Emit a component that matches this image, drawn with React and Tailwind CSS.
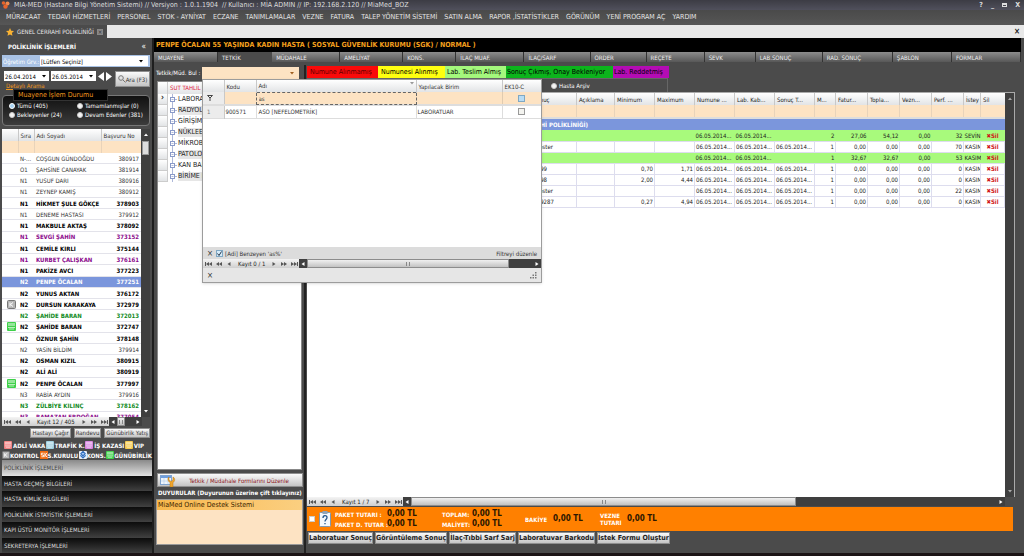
import React, { useState } from "react";

const menuItems = [
  "MÜRACAAT", "TEDAVİ HİZMETLERİ", "PERSONEL", "STOK - AYNİYAT", "ECZANE", "TANIMLAMALAR", "VEZNE", "FATURA",
  "TALEP YÖNETİM SİSTEMİ", "SATIN ALMA", "RAPOR ,İSTATİSTİKLER", "GÖRÜNÜM", "YENİ PROGRAM AÇ", "YARDIM",
];

const tabs = [
  "MUAYENE", "TETKİK", "MÜDAHALE", "AMELİYAT", "KONS.", "İLAÇ MUAF.", "İLAÇ/SARF",
  "ORDER", "REÇETE", "SEVK", "LAB.SONUÇ", "RAD. SONUÇ", "ŞABLON", "FORMLAR",
];

const patients = [
  { sira: "N-...", name: "COŞGUN GÜNDOĞDU", no: "380917" },
  { sira: "O1", name: "ŞAHSİNE CANAYAK", no: "381914" },
  { sira: "N1", name: "YUSUF DARI", no: "380916" },
  { sira: "N1", name: "ZEYNEP KAMIŞ", no: "380912" },
  { sira: "N1", name: "HİKMET ŞULE GÖKÇE", no: "378903", tone: "bold" },
  { sira: "N1", name: "DENEME HASTASI", no: "379912" },
  { sira: "N1", name: "MAKBULE AKTAŞ", no: "378092", tone: "bold" },
  { sira: "N1", name: "SEVGİ ŞAHİN", no: "373152", tone: "purple" },
  { sira: "N1", name: "CEMİLE KIRLI", no: "375144", tone: "bold" },
  { sira: "N1", name: "KURBET ÇALIŞKAN", no: "376161", tone: "purple" },
  { sira: "N1", name: "PAKİZE AVCI", no: "377223", tone: "bold" },
  { sira: "N2", name: "PENPE ÖCALAN", no: "377251", tone: "selected" },
  { sira: "N2", name: "YUNUS AKTAN", no: "376172", tone: "bold" },
  { sira: "N2", name: "DURSUN KARAKAYA", no: "372979", tone: "bold", icon: "kontrol" },
  { sira: "N2", name: "ŞAHİDE BARAN", no: "372013", tone: "green" },
  { sira: "N2", name: "ŞAHİDE BARAN", no: "372747", tone: "bold", icon: "bed" },
  { sira: "N2", name: "ÖZNUR ŞAHİN", no: "378148", tone: "bold" },
  { sira: "N2", name: "YASİN BİLDİM", no: "379914" },
  { sira: "N2", name: "OSMAN KIZIL", no: "380915", tone: "bold" },
  { sira: "N2", name: "ALİ ALİ", no: "380919", tone: "bold" },
  { sira: "N2", name: "PENPE ÖCALAN", no: "377997", tone: "bold", icon: "bed" },
  { sira: "N3", name: "RABİA AYDIN", no: "379916" },
  { sira: "N3", name: "ZÜLBİYE KILINÇ", no: "378162", tone: "green" },
  { sira: "N3", name: "RAMAZAN ERDOĞAN", no: "377054", tone: "purple" },
];

const toneClass = {
  bold: "font-bold text-black",
  purple: "font-bold text-[#8b0a8b]",
  green: "font-bold text-[#0f8a1c]",
  selected: "font-bold text-white bg-[#7b96dc]",
};

const treeItems = [
  "LABORATUAR", "RADYOLOJİ", "GİRİŞİMSEL", "NÜKLEER TIP", "MİKROBİYOLOJİ", "PATOLOJİ", "KAN BANKASI", "BİRİME BAĞLI",
];

const D = "06.05.2014...";
const results = [
  { sonuc: "", min: "", max: "", num: D, kab: D, son: "", m: "2", fatur: "27,06", topla: "54,12", vezn: "0,00", perf: "32", istey: "SEVİN", green: true },
  { sonuc: "Göster", min: "", max: "", num: D, kab: D, son: D, m: "1", fatur: "0,00", topla: "0,00", vezn: "0,00", perf: "70", istey: "KASIM" },
  { sonuc: "", min: "", max: "", num: D, kab: D, son: "", m: "1", fatur: "32,67", topla: "32,67", vezn: "0,00", perf: "53", istey: "KASIM", green: true },
  { sonuc: "0,99", min: "0,70", max: "1,71", num: D, kab: D, son: D, m: "1", fatur: "0,00", topla: "0,00", vezn: "0,00", perf: "0", istey: "KASIM" },
  { sonuc: "2,98", min: "2,00", max: "4,44", num: D, kab: D, son: D, m: "1", fatur: "0,00", topla: "0,00", vezn: "0,00", perf: "0", istey: "KASIM" },
  { sonuc: "Göster", min: "", max: "", num: D, kab: D, son: D, m: "1", fatur: "0,00", topla: "0,00", vezn: "0,00", perf: "22", istey: "KASIM" },
  { sonuc: "1,9287", min: "0,27", max: "4,94", num: D, kab: D, son: D, m: "1", fatur: "0,00", topla: "0,00", vezn: "0,00", perf: "0", istey: "KASIM" },
];

const resultHeads = [
  "", "Sonuç", "Açıklama", "Minimum", "Maximum", "Numune ...", "Lab. Kab...", "Sonuç T...",
  "M...", "Fatur...", "Topla...", "Vezn...", "Perf. ...", "İstey",
];

const navItems = [
  "HASTA GEÇMİŞ BİLGİLERİ", "HASTA KİMLİK BİLGİLERİ", "POLİKLİNİK İSTATİSTİK İŞLEMLERİ",
  "KAPI ÜSTÜ MONİTÖR İŞLEMLERİ", "SEKRETERYA İŞLEMLERİ",
];

const headBg = "bg-linear-to-b from-white to-[#e2e4e6]";
const silver = "bg-linear-to-b from-[#fafafa] to-[#c4c4c4] border border-[#8e8e8e]";

const Arrow = ({ left, double, bar, className = "" }) => (
  <svg viewBox="0 0 8 6" className={`w-2 h-1.5 shrink-0 ${left ? "" : "rotate-180"} ${className}`} fill="currentColor">
    {double ? <path d="M4 1v4L1 3zM7 1v4L4 3z" /> : <path d="M5.500 1v4L2.500 3z" />}
    {bar && <path d="M0 1h1v4H0z" />}
  </svg>
);

const Caret = ({ up, className = "" }) => (
  <svg viewBox="0 0 6 4" className={`w-1.5 h-1 shrink-0 ${up ? "rotate-180" : ""} ${className}`} fill="currentColor">
    <path d="M1 1h4L3 3.500z" />
  </svg>
);

const PagerButton = ({ label, ...rest }) => (
  <button type="button" aria-label={label} className="flex w-2.5 justify-center text-[#555]"><Arrow {...rest} /></button>
);

const Pager = ({ text }) => (
  <div className="flex items-center h-[9px] pl-px bg-linear-to-b from-[#f4f4f4] to-[#cfcfcf] text-[#222] shrink-0">
    <PagerButton label="İlk kayıt" left double bar />
    <PagerButton label="Önceki sayfa" left double />
    <PagerButton label="Önceki kayıt" left />
    <span className="px-1 whitespace-nowrap">{text}</span>
    <PagerButton label="Sonraki kayıt" />
    <PagerButton label="Sonraki sayfa" double />
    <PagerButton label="Son kayıt" double bar />
  </div>
);

const HScroll = ({ thumbClass }) => (
  <div className="flex flex-1 items-stretch bg-[#3f3f3f] text-white">
    <button type="button" aria-label="Sola kaydır" className="flex items-center w-2"><Arrow left /></button>
    <div className={`${thumbClass} flex items-center justify-center bg-linear-to-b from-[#f0f0f0] to-[#c2c2c2] border border-[#8c8c8c]`}>
      <span className="w-1 h-1 border-x border-[#888]" />
    </div>
    <span className="flex-1" />
    <button type="button" aria-label="Sağa kaydır" className="flex items-center w-2"><Arrow /></button>
  </div>
);

const BedIcon = ({ color = "#3fd04a", size = "w-[9px] h-[9px]" }) => (
  <svg viewBox="0 0 9 9" className={`${size} shrink-0`}>
    <rect width="9" height="9" rx="1" fill={color} />
    <rect x="1" y="1" width="7" height="3" fill="#fff" opacity="0.45" />
    <path d="M1 5.500h7M2 7h5" stroke="#fff" strokeWidth="0.8" opacity="0.8" />
  </svg>
);

const KontrolIcon = ({ size = "w-[9px] h-[9px]" }) => (
  <svg viewBox="0 0 9 9" className={`${size} shrink-0`}>
    <rect x="0.500" y="0.500" width="8" height="8" rx="1" fill="#b5b5b5" stroke="#777" />
    <path d="M3 2.500v4M6 2.500L3.500 4.500L6 6.500" stroke="#fff" fill="none" />
  </svg>
);

const SkIcon = () => (
  <svg viewBox="0 0 9 9" className="w-2 h-2 shrink-0">
    <rect width="9" height="9" fill="#f06a10" />
    <path d="M4 2.500H1.500v2H4v2H1.500M5.500 2v5M8 2L6 4.500L8 7" stroke="#fff" fill="none" />
  </svg>
);

const KonsIcon = () => (
  <svg viewBox="0 0 9 9" className="w-2 h-2 shrink-0">
    <rect width="9" height="9" rx="1" fill="#e8f0fa" />
    <path d="M4.500 0.500L7 3L4.500 5.500L2 3zM1.500 5l3 3l3-3" stroke="#2f6fc0" strokeWidth="1.200" fill="#a8c8f0" />
  </svg>
);

const Radio = ({ children, ...rest }) => (
  <label className="flex items-center gap-0.5 whitespace-nowrap">
    <input type="radio" className="appearance-none w-[6px] h-[6px] rounded-full bg-[#f4f4f4] border border-[#ccc] checked:bg-[#a8d4f5] checked:border-white shrink-0" {...rest} />
    {children}
  </label>
);

const PatientPanel = () => {
  const [status, setStatus] = useState("tumu");
  const radio = (value) => ({ name: "durum", checked: status === value, onChange: () => setStatus(value) });

  return (
    <aside className="w-[154px] shrink-0 flex flex-col pl-0.5 border-r-2 border-[#1e1e1e] bg-[#4b4b4b] text-white">
      <div className="flex items-center justify-between h-[17px] px-1.5 shrink-0">
        <h2 className="font-bold">POLİKLİNİK İŞLEMLERİ</h2>
        <button type="button" aria-label="Paneli daralt" className="text-[8px] leading-none">«</button>
      </div>

      <div className="flex items-center h-3 mr-0.5 bg-[#a9c2e4] pr-0.5 shrink-0">
        <label htmlFor="ogretim" className="w-[38px] pl-px whitespace-nowrap">Öğretim Grv.:</label>
        <div className="flex-1 flex items-center bg-white pr-1 text-black">
          <select id="ogretim" className="appearance-none flex-1 h-2.5 px-px">
            <option>[Lütfen Seçiniz]</option>
          </select>
          <Caret />
        </div>
      </div>

      <div className="flex items-start gap-[3px] h-5 pt-1 px-0.5 shrink-0">
        <div>
          <div className="flex gap-0.5">
            {["26.04.2014", "26.05.2014"].map((d, i) => (
              <div key={d} className="flex items-center w-[45px] h-2.5 bg-white text-black pr-0.5">
                <input aria-label={i ? "Bitiş tarihi" : "Başlangıç tarihi"} defaultValue={d} className="w-[37px] pl-px" />
                <Caret />
              </div>
            ))}
            <div className="flex items-center">
              <button type="button" aria-label="Önceki gün"><svg viewBox="0 0 7 9" className="w-[7px] h-[9px]" fill="#fff"><path d="M6 0v9L0 4.500z" /></svg></button>
              <button type="button" aria-label="Sonraki gün"><svg viewBox="0 0 7 9" className="w-[7px] h-[9px]" fill="#fff"><path d="M1 0v9L7 4.500z" /></svg></button>
            </div>
          </div>
          <a href="#detay" className="block pl-0.5 leading-[9px] text-[#f0981e] underline">Detaylı Arama</a>
        </div>
        <button type="button" className={`flex items-center justify-center flex-1 h-4 text-[#333] whitespace-nowrap ${silver}`}>
          <svg viewBox="0 0 8 8" className="w-2 h-2" fill="none" stroke="#777"><circle cx="3" cy="3" r="2.300" /><path d="M5 5l2.500 2.500" /></svg>
          Ara (F3)
        </button>
      </div>

      <fieldset className="flex flex-col h-[37px] mt-0.5 mb-[3px] mr-0.5 shrink-0 rounded border border-[#777] bg-linear-to-b from-[#111] to-[#3c3c3c]">
        <legend className="w-[95px] h-3 ml-2.5 pl-1 bg-black border border-[#333] text-[#f0981e] text-[7px] leading-[11px]">Muayene İşlem Durumu</legend>
        <div className="grid grid-cols-[68px_1fr] pl-1.5 leading-[9px]">
          <Radio {...radio("tumu")}>Tümü (405)</Radio>
          <Radio {...radio("tamam")}>Tamamlanmışlar (0)</Radio>
          <Radio {...radio("bekleyen")}>Bekleyenler (24)</Radio>
          <Radio {...radio("devam")}>Devam Edenler (381)</Radio>
        </div>
      </fieldset>

      <div className="flex flex-1 min-h-0 mr-0.5">
        <div className="flex-1 bg-white text-[#333] overflow-hidden">
          <table className="w-full table-fixed h-[294px]">
            <colgroup><col className="w-4" /><col className="w-4" /><col className="w-[67px]" /><col /></colgroup>
            <thead>
              <tr className={`h-3 text-left ${headBg}`}>
                <th className="border-r border-[#c8c8c8]" />
                <th className="font-normal pl-0.5 border-r border-[#c8c8c8]">Sıra</th>
                <th className="font-normal pl-0.5 border-r border-[#c8c8c8]">Adı Soyadı</th>
                <th className="font-normal pl-0.5 whitespace-nowrap">Başvuru No</th>
              </tr>
              <tr className="h-3 bg-[#fde3c3]"><td /><td className="border-x border-[#e8d3ba]" /><td className="border-r border-[#e8d3ba]" /><td /></tr>
            </thead>
            <tbody>
              {patients.map((p) => (
                <tr key={p.no} className={`border-b border-[#e3e3ea] whitespace-nowrap ${toneClass[p.tone] || ""}`}>
                  <td className="pl-[5px]">{p.icon === "bed" && <BedIcon />}{p.icon === "kontrol" && <KontrolIcon />}</td>
                  <td className="pl-0.5">{p.sira}</td>
                  <td className="pl-0.5">{p.name}</td>
                  <td className="pr-0.5 text-right">{p.no}</td>
                </tr>
              ))}
            </tbody>
          </table>
        </div>
        <div className="w-[9px] flex flex-col items-center bg-[#3f3f3f] py-1">
          <Caret up />
          <span className="w-[7px] h-3.5 mt-1 bg-[#ddd] border border-[#999]" />
          <span className="flex-1" />
          <Caret />
        </div>
      </div>
      <div className="flex h-[9px] mr-2.5 shrink-0">
        <Pager text="Kayıt 12 / 405" />
        <HScroll thumbClass="w-2" />
      </div>

      <div className="flex justify-end gap-[3px] h-3 pt-0.5 pr-0.5 shrink-0">
        {["Hastayı Çağır", "Randevu", "Günübirlik Yatış"].map((t) => (
          <button key={t} type="button" className={`h-2.5 px-px leading-2 text-[#333] whitespace-nowrap ${silver}`}>{t}</button>
        ))}
      </div>

      <div className="h-[22px] pt-0.5 shrink-0 font-bold whitespace-nowrap leading-[9px]">
        <div className="flex items-center justify-between pl-0.5 pr-2 h-2.5">
          <span className="flex items-center gap-px"><BedIcon size="w-2 h-2" color="#f08080" />ADLİ VAKA</span>
          <span className="flex items-center gap-px"><BedIcon size="w-2 h-2" color="#9fd0e0" />TRAFİK K.</span>
          <span className="flex items-center gap-px"><BedIcon size="w-2 h-2" color="#d884e0" />İŞ KAZASI</span>
          <span className="flex items-center gap-px"><BedIcon size="w-2 h-2" color="#f5c84a" />VIP</span>
        </div>
        <div className="flex items-center justify-between h-2.5">
          <span className="flex items-center"><KontrolIcon size="w-2 h-2" />KONTROL</span>
          <span className="flex items-center"><SkIcon />S.KURULU</span>
          <span className="flex items-center"><KonsIcon />KONS.</span>
          <span className="flex items-center"><BedIcon size="w-2 h-2" />GÜNÜBİRLİK</span>
        </div>
      </div>

      <nav className="flex flex-col h-[93px] shrink-0">
        <button type="button" className="flex-1 pl-0.5 text-left text-[#444] bg-linear-to-b from-[#8a8a8a] to-[#e2e2e2]">POLİKLİNİK İŞLEMLERİ</button>
        {navItems.map((t) => (
          <button key={t} type="button" className="flex-1 pl-0.5 text-left text-[#ddd] bg-linear-to-b from-[#0c0c0c] to-[#414141]">{t}</button>
        ))}
      </nav>
    </aside>
  );
};

const LookupPopup = () => (
  <div className="absolute z-10 left-12 top-3.5 w-[340px] h-[204px] flex flex-col bg-white border border-[#9c9c9c] text-[#333] shadow">
    <table className="w-full table-fixed">
      <colgroup><col className="w-[21px]" /><col className="w-8" /><col /><col className="w-[86px]" /><col className="w-[39px]" /></colgroup>
      <thead>
        <tr className={`h-3 text-left ${headBg}`}>
          <th className="border-r border-[#c8c8c8]" />
          <th className="font-normal pl-0.5 border-r border-[#c8c8c8]">Kodu</th>
          <th className="font-normal pl-0.5 border-r border-[#c8c8c8]">
            <span className="flex justify-between pr-px">Adı<Caret className="text-[#999]" /></span>
          </th>
          <th className="font-normal pl-0.5 border-r border-[#c8c8c8]">Yapılacak Birim</th>
          <th className="font-normal pl-0.5">EK10-C</th>
        </tr>
      </thead>
      <tbody>
        <tr className="h-3 bg-[#fde3c3]">
          <td className="pl-1 bg-[#ececec] border-r border-[#c8c8c8]">
            <svg viewBox="0 0 6 6" className="w-1.5 h-1.5" fill="none" stroke="#444"><path d="M0.500 0.500h5L3 3zM3 3v3" /></svg>
          </td>
          <td />
          <td className="border border-dashed border-[#666]"><input aria-label="Adı filtresi" defaultValue="as" className="block w-full h-2 pl-0.5" /></td>
          <td />
          <td className="border-l border-[#e0cbb0] text-center"><input type="checkbox" aria-label="EK10-C filtresi" className="appearance-none block mx-auto w-[7px] h-[7px] bg-[#b8dcf4] border border-[#7fa8c4]" /></td>
        </tr>
        <tr className="h-0.5 bg-[#ddd]"><td colSpan={5} /></tr>
        <tr className="h-3 border-b border-[#ddd]">
          <td className="pl-1 bg-[#ececec] border-r border-[#c8c8c8] text-[#777]">1</td>
          <td className="pl-px border-r border-[#ddd]">900571</td>
          <td className="pl-0.5 border-r border-[#ddd]">ASO [NEFELOMETRİK]</td>
          <td className="pl-px border-r border-[#ddd]">LABORATUAR</td>
          <td><input type="checkbox" aria-label="EK10-C" className="appearance-none block mx-auto w-[7px] h-[7px] bg-[#f4f4f0] border border-[#999]" /></td>
        </tr>
      </tbody>
    </table>
    <div className="flex-1" />
    <div className="flex items-center h-3 gap-[3px] px-1 bg-[#dcdcdc]">
      <button type="button" aria-label="Filtreyi kaldır" className="text-[8px]">×</button>
      <label className="flex items-center gap-0.5">
        <span className="relative flex">
          <input type="checkbox" defaultChecked className="peer appearance-none w-[7px] h-[7px] bg-[#d6ebfa] border border-[#7fa8c4]" />
          <svg viewBox="0 0 7 7" className="absolute inset-0 w-[7px] h-[7px] hidden peer-checked:block pointer-events-none" fill="none" stroke="#234"><path d="M1.500 3.500l1.500 2l2.500-4" /></svg>
        </span>
        [Adi] Benzeyen 'as%'
      </label>
      <a href="#filtre" className="ml-auto">Filtreyi düzenle</a>
    </div>
    <div className="flex h-[9px]">
      <Pager text="Kayıt 0 / 1" />
      <HScroll thumbClass="w-5/6" />
    </div>
    <div className="flex items-center justify-between h-3.5 px-1 bg-[#e6e6e6]">
      <button type="button" aria-label="Kapat" className="text-[8px]">×</button>
      <svg viewBox="0 0 7 7" className="w-[7px] h-[7px]" fill="#777"><path d="M5 5h1.500v1.500H5zM2.500 5H4v1.500H2.500zM0 5h1.500v1.500H0zM5 2.500h1.500V4H5zM2.500 2.500H4V4H2.500zM5 0h1.500v1.500H5z" /></svg>
    </div>
  </div>
);

const RequestColumn = () => (
  <section className="relative w-[149px] shrink-0 flex flex-col pb-2 text-white">
    <div className="flex items-center h-3.5 pl-0.5 pt-px shrink-0">
      <label htmlFor="tetkik" className="w-[46px] whitespace-nowrap">Tetkik/Müd. Bul :</label>
      <div className="flex-1 flex items-center h-3 mr-1 pr-1 bg-[#fde3c3] text-black">
        <input id="tetkik" className="flex-1 min-w-0 h-2.5" />
        <Caret className="text-[#a06020]" />
      </div>
    </div>
    <LookupPopup />

    <div className="flex-1 ml-[3px] mr-px mt-0.5 bg-white border border-[#888] text-[#222] overflow-hidden">
      <div className="flex items-center h-3 text-[#e0203c]">
        <span className={`w-2.5 h-full border-r border-[#ccc] ${headBg}`} />
        <span className={`flex-1 h-full leading-3 pl-0.5 ${headBg}`}>SUT TAHLİL TETKİK</span>
      </div>
      <ul>
        {treeItems.map((t, i) => (
          <li key={t} className="flex items-center h-[11px] text-[7px]">
            <span className={`w-2.5 h-full border-r border-b border-[#ccc] text-center text-[8px] leading-2 font-bold ${headBg}`}>{i === 0 ? "›" : ""}</span>
            <svg viewBox="0 0 8 11" className="w-2 h-[11px] mx-px shrink-0" fill="none" stroke="#8a9ac8"><rect x="1.500" y="3.500" width="4" height="4" /><path d="M2.500 5.500h2M3.500 0v3M3.500 8v3M6 5.500h2" strokeWidth="0.700" /></svg>
            <span className={`flex-1 whitespace-nowrap ${i % 2 ? "bg-[#e6e6e6]" : ""}`}>{t}</span>
          </li>
        ))}
      </ul>
    </div>

    <button type="button" className={`flex items-center h-3.5 mt-[3px] ml-[3px] shrink-0 text-[#8a1420] whitespace-nowrap ${silver}`}>
      <svg viewBox="0 0 16 13" className="w-4 h-[13px] ml-0.5 shrink-0">
        <rect x="0.500" y="1.500" width="11" height="9" fill="#eef5fd" stroke="#7fa3cf" />
        <path d="M1 2h10v2H1z" fill="#6f9fe0" />
        <path d="M4 4v6M8 4v6M1 7h10" stroke="#b7cce6" strokeWidth="0.600" />
        <path d="M9 3v3l2 1.500l2-1.500V3c2 1 2.500 4 0 5.500V13h-3V8.500C7.500 7 7.500 4 9 3z" fill="#f0a52c" stroke="#b87812" strokeWidth="0.500" />
      </svg>
      <span className="flex-1 text-center">Tetkik / Müdahale Formlarını Düzenle</span>
    </button>
    <h3 className="h-3 leading-3 pl-1 shrink-0 font-bold whitespace-nowrap">DUYURULAR (Duyurunun üzerine çift tıklayınız)</h3>
    <div className="h-[46px] ml-0.5 shrink-0 bg-[#fde3c3] border border-[#999]">
      <a href="#destek" className="block h-2.5 pl-px leading-2.5 text-[7px] text-[#3a2400] bg-linear-to-r from-[#f8b84c] to-[#fbcf80]">MiaMed Online Destek Sistemi</a>
    </div>
  </section>
);

const money = "text-[8px] leading-2.5 text-[#2c1600]";

const ResultsPanel = () => (
  <section className="flex-1 min-w-0 flex flex-col ml-px pl-px pb-2 mr-1 border-l-2 border-[#222] text-white">
    <div className="flex h-3 mt-px shrink-0 text-[7px] leading-3 text-black whitespace-nowrap">
      <span className="w-[71px] pl-[3px] bg-[#fa0a0a] text-[#5a0000]">Numune Alınmamış</span>
      <span className="w-[67px] pl-[3px] bg-[#ffff10]">Numunesi Alınmış</span>
      <span className="w-[61px] pl-0.5 bg-[#a4f87c]">Lab. Teslim Almış</span>
      <span className="w-[107px] pl-px bg-[#0cb41c]">Sonuç Çıkmış, Onay Bekleniyor</span>
      <span className="w-[56px] pl-px bg-[#b40cb4]">Lab. Reddetmiş</span>
    </div>
    <div className="flex items-center h-3.5 w-[361px] pl-[244px] shrink-0 border-t border-r border-[#666]">
      <Radio name="arsiv">Hasta Arşiv</Radio>
    </div>

    <div className="flex flex-1 min-h-0 mr-0.5 border-r border-t border-[#aaa]">
      <div className="flex-1 bg-white text-[#222] overflow-hidden">
        <table className="w-full table-fixed whitespace-nowrap">
          <colgroup>
            <col /><col className="w-[46px]" /><col className="w-[38px]" /><col className="w-10" /><col className="w-10" />
            <col className="w-10" /><col className="w-10" /><col className="w-10" /><col className="w-[21px]" />
            <col className="w-8" /><col className="w-8" /><col className="w-8" /><col className="w-8" /><col className="w-[17px]" /><col className="w-6" />
          </colgroup>
          <thead>
            <tr className={`h-3 text-left ${headBg}`}>
              {resultHeads.map((h, i) => (
                <th key={i} className="font-normal pl-0.5 border-r border-[#c8c8c8] overflow-hidden">{h}</th>
              ))}
              <th className="font-normal pl-0.5">Sil</th>
            </tr>
            <tr className="h-3 bg-[#fde3c3]">
              {resultHeads.map((h, i) => <td key={i} className="border-r border-[#e8d3ba]" />)}
              <td />
            </tr>
            <tr className="h-0.5 bg-[#ddd]"><td colSpan={15} /></tr>
          </thead>
          <tbody>
            <tr className="h-[11px] bg-[#7b96dc] text-white font-bold">
              <td colSpan={15}><span className="block w-[281px] text-right">(GENEL CERRAHİ POLİKLİNİĞİ)</span></td>
            </tr>
            {results.map((r, i) => (
              <tr key={i} className={`h-[11px] border-b border-[#dde] *:overflow-hidden *:px-px ${r.green ? "bg-[#a8fa7c]" : "*:border-r *:border-[#dde]"}`}>
                <td />
                <td><span className="pl-[3px]">{r.sonuc}</span></td>
                <td />
                <td className="text-right">{r.min}</td>
                <td className="text-right">{r.max}</td>
                <td>{r.num}</td>
                <td>{r.kab}</td>
                <td>{r.son}</td>
                <td className="text-right">{r.m}</td>
                <td className="text-right">{r.fatur}</td>
                <td className="text-right">{r.topla}</td>
                <td className="text-right">{r.vezn}</td>
                <td className="text-right">{r.perf}</td>
                <td>{r.istey}</td>
                <td className="text-center"><button type="button" className="font-bold text-[#d01818]">✖Sil</button></td>
              </tr>
            ))}
          </tbody>
        </table>
      </div>
      <div className="w-[9px] flex flex-col items-center justify-between py-1 bg-[#3f3f3f] text-[#aaa]">
        <Caret up /><Caret />
      </div>
    </div>
    <div className="flex h-[9px] mr-3 shrink-0">
      <Pager text="Kayıt 1 / 7" />
      <HScroll thumbClass="w-[64%]" />
    </div>

    <div className="flex items-center h-6 mt-px mr-1 pl-0.5 shrink-0 bg-[#ff8000] font-bold whitespace-nowrap">
      <input type="checkbox" aria-label="Paket" className="appearance-none w-1.5 h-1.5 bg-white border border-[#ccc]" />
      <svg viewBox="0 0 12 16" className="w-3 h-4 mx-1 shrink-0">
        <rect x="0.500" y="1.500" width="11" height="14" rx="1" fill="#f4f8fc" stroke="#8098b0" />
        <rect x="3.500" y="0" width="5" height="3" fill="#90a4b8" />
        <path d="M4 7c0-3 4-3 4-0.500C8 8.500 6 8.500 6 10.500M6 12v1.300" fill="none" stroke="#24568c" strokeWidth="1.300" />
      </svg>
      <dl className="grid grid-cols-[52px_55px_30px_53px] items-center">
        <dt>PAKET TUTARI :</dt><dd className={money}>0,00 TL</dd>
        <dt>TOPLAM:</dt><dd className={money}>0,00 TL</dd>
        <dt>PAKET D. TUTAR :</dt><dd className={money}>0,00 TL</dd>
        <dt>MALİYET:</dt><dd className={money}>0,00 TL</dd>
      </dl>
      <dl className="grid grid-cols-[28px_47px_27px_40px] items-center leading-[7px]">
        <dt>BAKİYE</dt><dd className={money}>0,00 TL</dd>
        <dt>VEZNE<br />TUTARI</dt><dd className={money}>0,00 TL</dd>
      </dl>
    </div>
    <div className="flex gap-0.5 h-3.5 pt-px pl-px mr-1 shrink-0 text-[7px] text-[#222]">
      {["Laboratuar Sonuç", "Görüntüleme Sonuç", "İlaç-Tıbbi Sarf Sarj", "Laboratuvar Barkodu", "İstek Formu Oluştur"].map((t) => (
        <button key={t} type="button" className={`h-3 font-bold leading-2.5 whitespace-nowrap ${silver}`}>{t}</button>
      ))}
    </div>
  </section>
);

const App = () => (
  <div className="h-screen flex flex-col bg-[#4b4b4b] font-['DejaVu_Sans_Condensed','Noto_Sans',sans-serif] text-[6px] leading-[9px] overflow-hidden">
    <header className="shrink-0">
      <div className="flex items-center h-2.5 pl-px pr-1 bg-linear-to-b from-[#3c3c44] to-[#50505c] text-[#ddd] text-[7px]">
        <svg viewBox="0 0 9 8" className="w-[9px] h-2 mr-1" fill="#e8642c"><circle cx="2.500" cy="2" r="1.800" /><circle cx="6.500" cy="2.500" r="2" fill="#f08a50" /><circle cx="4.500" cy="5.500" r="2.200" /></svg>
        <h1 className="whitespace-pre">MIA-MED (Hastane Bilgi Yönetim Sistemi) // Versiyon : 1.0.1.1904  // Kullanıcı : MİA ADMIN // IP: 192.168.2.120 // MiaMed_BOZ</h1>
        <div className="ml-auto flex gap-2 font-bold">
          <button type="button">?</button>
          <button type="button" aria-label="Küçült">_</button>
          <button type="button" aria-label="Geri yükle" className="flex items-center"><span className="w-[5px] h-1 border border-t-2 border-[#ddd]" /></button>
          <button type="button" aria-label="Kapat">X</button>
        </div>
      </div>
      <nav className="flex items-center gap-[7px] h-[15px] pl-1.5 bg-linear-to-b from-[#4a4a4a] to-[#565656] text-[#e4e4e4] text-[7px] whitespace-nowrap">
        {menuItems.map((m) => <button key={m} type="button">{m}</button>)}
      </nav>
      <div className="flex justify-between h-[13px] bg-[#e8e8e8]">
        <div className="flex items-center gap-[3px] w-[107px] pl-1.5 bg-[#4b4b4b] text-[#e8e8e8] whitespace-nowrap">
          <svg viewBox="0 0 10 10" className="w-2 h-2 shrink-0" fill="#f9b233"><path d="M5 0l1.500 3.300l3.500 0.400l-2.600 2.400l0.700 3.600L5 8L1.900 9.700l0.700-3.600L0 3.700l3.500-0.400z" /></svg>
          <span>GENEL CERRAHİ POLİKLİNİĞİ</span>
          <button type="button" aria-label="Sekmeyi kapat" className="w-1.5 h-1.5 leading-1 bg-[#888] text-[#333]">×</button>
        </div>
        <button type="button" aria-label="Kapat" className="pr-1 font-bold text-[8px] text-[#222]">×</button>
      </div>
    </header>

    <div className="flex flex-1 min-h-0 border-b-3 border-[#1c1416]">
      <PatientPanel />
      <div className="flex-1 min-w-0 flex flex-col pr-[3px]">
        <p className="h-3.5 pl-0.5 shrink-0 bg-black font-bold text-[7px] leading-3.5 text-[#f5a01e] whitespace-nowrap">
          PENPE ÖCALAN 55 YAŞINDA KADIN HASTA ( SOSYAL GÜVENLİK KURUMU (SGK) / NORMAL )
        </p>
        <nav className="grid grid-cols-[64fr_54fr_68fr_63fr_53fr_68fr_66fr_56fr_58fr_51fr_67fr_70fr_59fr_69fr] h-2.5 shrink-0 text-[#eee]">
          {tabs.map((t) => (
            <button key={t} type="button" className={`text-left pl-1 whitespace-nowrap ${t === "TETKİK" ? "bg-[#4b4b4b]" : "border-r border-[#333] bg-linear-to-b from-[#8c8c8c] to-[#585858]"}`}>{t}</button>
          ))}
        </nav>
        <div className="flex flex-1 min-h-0 mt-[3px]">
          <RequestColumn />
          <ResultsPanel />
        </div>
      </div>
    </div>
  </div>
);

export default App;
